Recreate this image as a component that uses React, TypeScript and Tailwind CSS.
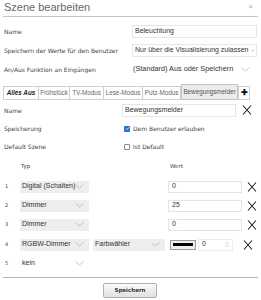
import React from "react";

const Chevron = () => (
  <svg width="9" height="5" viewBox="0 0 9 5">
    <path d="M0.5 0.5 L4.5 4 L8.5 0.5" fill="none" stroke="#b5b5b5" strokeWidth="0.8" />
  </svg>
);

const BigX = () => (
  <svg width="10" height="10" viewBox="0 0 10 10">
    <path d="M1 0.5 L9 9.5 M9 0.5 L1 9.5" stroke="#1a1a1a" strokeWidth="1.05" />
  </svg>
);

const Select = ({ value, w }: { value: string; w: string }) => (
  <div className={`flex items-center justify-between h-[12px] bg-[#eeeeee] pl-[2px] pr-[5px] text-[7px] text-[#333] ${w}`}>
    <span className="whitespace-nowrap">{value}</span>
    <Chevron />
  </div>
);

const ValueInput = ({ value }: { value: string }) => (
  <div className="w-[74px] h-[12px] border border-[#e4e4e4] flex items-center pl-[3px] text-[7px] text-[#333]">{value}</div>
);

const lbl = "text-[6px] font-['DejaVu_Sans',sans-serif] text-[#444] whitespace-nowrap";

export default function App() {
  const rows = [
    { n: "1", t: "Digital (Schalten)", v: "0" },
    { n: "2", t: "Dimmer", v: "25" },
    { n: "3", t: "Dimmer", v: "0" },
  ];
  return (
    <div className="w-[261px] h-[300px] bg-white overflow-hidden font-['Liberation_Sans',Arial,sans-serif] text-[#333]">
      <div className="mx-[3px] flex items-center justify-between h-[17px] border-b border-[#c4c4c4] pl-[1px] pr-[5px] pb-[2px]">
        <span className="text-[11px] text-[#666] leading-none">Szene bearbeiten</span>
        <span className="text-[8px] text-[#aaa] leading-none">×</span>
      </div>

      <div className="flex flex-col gap-[6px] mt-[8px] pl-[4px] pr-[4px]">
        <div className="flex items-center h-[13px]">
          <span className={`w-[128px] ${lbl}`}>Name</span>
          <div className="flex-1 h-[13px] border border-[#e6e6e6] flex items-center pl-[2px] text-[7px]">Beleuchtung</div>
        </div>
        <div className="flex items-center h-[13px]">
          <span className={`w-[128px] ${lbl}`}>Speichern der Werte für den Benutzer</span>
          <div className="flex-1 h-[13px] border border-[#e6e6e6] flex items-center justify-between pl-[2px] pr-[1px] text-[7px] overflow-hidden whitespace-nowrap">
            <span>Nur über die Visualisierung zulassen</span>
            <span className="text-[5px] text-[#aaa]">✓</span>
          </div>
        </div>
        <div className="flex items-center h-[13px]">
          <span className={`w-[128px] ${lbl}`}>An/Aus Funktion an Eingängen</span>
          <div className="flex-1 h-[13px] flex items-center justify-between pl-[1px] pr-[7px] text-[7.3px]">
            <span>(Standard) Aus oder Speichern</span>
            <Chevron />
          </div>
        </div>
      </div>

      <div className="mt-[8px] ml-[3px] flex items-end h-[16px]">
        <div className="flex items-stretch h-[14px] border border-[#cfcfcf] text-[6.3px] text-[#666] whitespace-nowrap">
          <div className="w-[35px] flex items-center justify-center font-bold italic text-[#222] border-r border-[#cfcfcf]">Alles Aus</div>
          <div className="w-[31px] flex items-center justify-center border-r border-[#cfcfcf]">Frühstück</div>
          <div className="w-[34px] flex items-center justify-center border-r border-[#cfcfcf]">TV-Modus</div>
          <div className="w-[39px] flex items-center justify-center border-r border-[#cfcfcf]">Lese-Modus</div>
          <div className="w-[37px] flex items-center justify-center">Putz-Modus</div>
        </div>
        <div className="w-[57px] h-[16px] flex items-center justify-center bg-[#ececec] border border-[#c4c4c4] text-[6.3px] text-[#555] whitespace-nowrap">Bewegungsmelder</div>
        <div className="h-[14px] w-[12px] flex items-center justify-center border border-[#cfcfcf] text-[8px] font-bold text-[#111] leading-none">✚</div>
      </div>

      <div className="pl-[4px] mt-[4px] flex flex-col gap-[5px]">
        <div className="flex items-center h-[13px]">
          <span className={`w-[118px] ${lbl}`}>Name</span>
          <div className="w-[114px] h-[13px] border border-[#e6e6e6] flex items-center pl-[2px] text-[7px]">Bewegungsmelder</div>
          <div className="ml-[6px] -mt-[2px]"><BigX /></div>
        </div>
        <div className="flex items-center h-[13px]">
          <span className={`w-[120px] ${lbl}`}>Speicherung</span>
          <div className="w-[6px] h-[6px] bg-[#2a6fd6] rounded-[1px] flex items-center justify-center">
            <svg width="5" height="5" viewBox="0 0 5 5"><path d="M1 2.6 L2 3.6 L4 1.3" fill="none" stroke="#fff" strokeWidth="0.8" /></svg>
          </div>
          <span className={`ml-[3px] ${lbl}`}>Dem Benutzer erlauben</span>
        </div>
        <div className="flex items-center h-[13px]">
          <span className={`w-[120px] ${lbl}`}>Default Szene</span>
          <div className="w-[6px] h-[6px] border border-[#888] rounded-[1px]" />
          <span className={`ml-[3px] ${lbl}`}>Ist Default</span>
        </div>
      </div>

      <div className="pl-[5px] mt-[9px]">
        <div className="flex items-center h-[8px] text-[5.5px] font-['DejaVu_Sans',sans-serif] text-[#444]">
          <span className="ml-[16px] w-[149px]">Typ</span>
          <span>Wert</span>
        </div>
        <div className="mt-[10px] flex flex-col gap-[6px]">
          {rows.map((r) => (
            <div key={r.n} className="flex items-center h-[13px]">
              <span className="w-[15px] text-[5px] font-['DejaVu_Sans',sans-serif] text-[#444]">{r.n}</span>
              <Select value={r.t} w="w-[69px]" />
              <div className="ml-[79px]"><ValueInput value={r.v} /></div>
              <div className="ml-[5px]"><BigX /></div>
            </div>
          ))}
          <div className="flex items-center h-[13px] mt-[1px]">
            <span className="w-[15px] text-[5px] font-['DejaVu_Sans',sans-serif] text-[#444]">4</span>
            <Select value="RGBW-Dimmer" w="w-[69px]" />
            <div className="ml-[4px]"><Select value="Farbwähler" w="w-[72px]" /></div>
            <div className="ml-[5px] w-[26px] h-[10px] border border-[#9a9a9a] bg-[#efefef] flex items-center justify-center">
              <div className="w-[20px] h-[3px] bg-black" />
            </div>
            <div className="ml-[2px] w-[35px] h-[12px] border border-[#ececec] flex items-center justify-between pl-[3px] pr-[3px] text-[7px]">
              <span>0</span>
              <svg width="4" height="7" viewBox="0 0 4 7"><path d="M0.5 2.8 L2 1 L3.5 2.8 M0.5 4.2 L2 6 L3.5 4.2" fill="none" stroke="#bbb" strokeWidth="0.6" /></svg>
            </div>
            <div className="ml-[10px]"><BigX /></div>
          </div>
          <div className="flex items-center h-[13px]">
            <span className="w-[15px] text-[5px] font-['DejaVu_Sans',sans-serif] text-[#444]">5</span>
            <div className="flex items-center justify-between h-[12px] w-[69px] bg-white pl-[2px] pr-[5px] text-[7px]">
              <span>kein</span>
              <Chevron />
            </div>
          </div>
        </div>
      </div>

      <div className="mx-[3px] mt-[7px] border-t border-[#b5b5b5]" />
      <div className="flex justify-center mt-[5px] pr-[1px]">
        <div className="w-[54px] h-[15px] rounded-[2px] border border-[#b0b0b0] bg-gradient-to-b from-[#fbfbfb] to-[#e0e0e0] flex items-center justify-center text-[5.5px] font-bold font-['DejaVu_Sans',sans-serif] text-[#333]">Speichern</div>
      </div>
    </div>
  );
}
